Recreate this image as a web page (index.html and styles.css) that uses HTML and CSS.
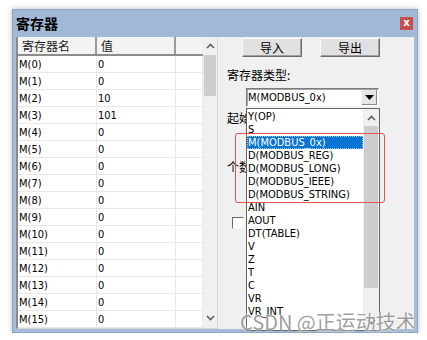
FILE: index.html
```html
<!DOCTYPE html>
<html lang="zh-CN">
    <head>
        <meta charset="UTF-8">
        <title>寄存器</title>
        <link rel="stylesheet" href="styles.css">
    </head>
    <body>
        <div class="window">
            <div class="titlebar">
                <span class="title">寄存器</span>
                <span class="close">x</span>
            </div>
            <div class="client">
                <div class="grid">
                    <div class="grid-body">
                        <div class="row head">
                            <span class="c1">寄存器名</span><span class="c2">值</span><span class="c3"></span>
                        </div>
                        <div class="row"><span class="c1">M(0)</span><span class="c2">0</span><span class="c3"></span></div>
                        <div class="row"><span class="c1">M(1)</span><span class="c2">0</span><span class="c3"></span></div>
                        <div class="row"><span class="c1">M(2)</span><span class="c2">10</span><span class="c3"></span></div>
                        <div class="row"><span class="c1">M(3)</span><span class="c2">101</span><span class="c3"></span></div>
                        <div class="row"><span class="c1">M(4)</span><span class="c2">0</span><span class="c3"></span></div>
                        <div class="row"><span class="c1">M(5)</span><span class="c2">0</span><span class="c3"></span></div>
                        <div class="row"><span class="c1">M(6)</span><span class="c2">0</span><span class="c3"></span></div>
                        <div class="row"><span class="c1">M(7)</span><span class="c2">0</span><span class="c3"></span></div>
                        <div class="row"><span class="c1">M(8)</span><span class="c2">0</span><span class="c3"></span></div>
                        <div class="row"><span class="c1">M(9)</span><span class="c2">0</span><span class="c3"></span></div>
                        <div class="row"><span class="c1">M(10)</span><span class="c2">0</span><span class="c3"></span></div>
                        <div class="row"><span class="c1">M(11)</span><span class="c2">0</span><span class="c3"></span></div>
                        <div class="row"><span class="c1">M(12)</span><span class="c2">0</span><span class="c3"></span></div>
                        <div class="row"><span class="c1">M(13)</span><span class="c2">0</span><span class="c3"></span></div>
                        <div class="row"><span class="c1">M(14)</span><span class="c2">0</span><span class="c3"></span></div>
                        <div class="row"><span class="c1">M(15)</span><span class="c2">0</span><span class="c3"></span></div>
                    </div>
                    <div class="vscroll grid-scroll">
                        <div class="arrow">
                            <svg width="9" height="6" viewBox="0 0 9 6"><path d="M1 5 L4.5 1.5 L8 5" fill="none" stroke="#606060" stroke-width="1.6"/></svg>
                        </div>
                        <div class="thumb"></div>
                        <div class="track"></div>
                        <div class="arrow">
                            <svg width="9" height="6" viewBox="0 0 9 6"><path d="M1 1 L4.5 4.5 L8 1" fill="none" stroke="#606060" stroke-width="1.6"/></svg>
                        </div>
                    </div>
                </div>

                <div class="side">
                    <div class="buttons">
                        <button class="btn">导入</button>
                        <button class="btn">导出</button>
                    </div>
                    <div class="label">寄存器类型:</div>
                    <div class="combo">
                        <div class="combo-box">
                            <span class="combo-text">M(MODBUS_0x)</span>
                            <span class="drop-btn">
                                <svg width="9" height="5" viewBox="0 0 9 5"><path d="M0 0 H9 L4.5 5 Z" fill="#000"/></svg>
                            </span>
                        </div>
                        <div class="list">
                            <div class="items">
                                <div class="item">Y(OP)</div>
                                <div class="item">S</div>
                                <div class="item selected">M(MODBUS_0x)</div>
                                <div class="item">D(MODBUS_REG)</div>
                                <div class="item">D(MODBUS_LONG)</div>
                                <div class="item">D(MODBUS_IEEE)</div>
                                <div class="item">D(MODBUS_STRING)</div>
                                <div class="item">AIN</div>
                                <div class="item">AOUT</div>
                                <div class="item">DT(TABLE)</div>
                                <div class="item">V</div>
                                <div class="item">Z</div>
                                <div class="item">T</div>
                                <div class="item">C</div>
                                <div class="item">VR</div>
                                <div class="item">VR_INT</div>
                            </div>
                            <div class="vscroll list-scroll">
                                <div class="arrow">
                                    <svg width="9" height="6" viewBox="0 0 9 6"><path d="M1 5 L4.5 1.5 L8 5" fill="none" stroke="#606060" stroke-width="1.6"/></svg>
                                </div>
                                <div class="thumb"></div>
                                <div class="track"></div>
                                <div class="arrow">
                                    <svg width="9" height="6" viewBox="0 0 9 6"><path d="M1 1 L4.5 4.5 L8 1" fill="none" stroke="#606060" stroke-width="1.6"/></svg>
                                </div>
                            </div>
                        </div>
                        <div class="mark"></div>
                    </div>
                    <div class="field first">起始</div>
                    <div class="field second">个数</div>
                    <div class="check"></div>
                </div>
            </div>
        </div>
        <div class="watermark">CSDN @正运动技术</div>
    </body>
</html>
```

FILE: styles.css
```css
body {
    margin: 0;
    background-color: #ffffff;
    font-family: "DejaVu Sans Condensed", "DejaVu Sans", sans-serif;
    font-size: 11px;
    color: #000;
}
.window {
    position: relative;
    box-sizing: border-box;
    width: 406px;
    height: 324px;
    margin: 9px 0 0 12px;
    border: 1px solid #8fa4bd;
    background-color: #a4bdd9;
    box-shadow: 0 0 6px rgba(0, 0, 0, 0.25);
    display: flex;
    flex-direction: column;
}
.titlebar {
    height: 27px;
    display: flex;
    align-items: center;
    justify-content: space-between;
    padding: 0 4px 0 3px;
    background-color: #9fb9d6;
}
.title {
    font-family: "Noto Sans CJK SC", sans-serif;
    font-weight: bold;
    font-size: 14px;
    margin-top: -1px;
}
.close {
    width: 13px;
    height: 13px;
    background-color: #c94f4f;
    color: #fff;
    font-family: "DejaVu Sans", sans-serif;
    font-weight: bold;
    font-size: 10px;
    line-height: 11px;
    text-align: center;
    margin-top: -1px;
}
.client {
    flex: 1;
    margin: 0 3px 3px 3px;
    background-color: #f0f0f0;
    display: flex;
    position: relative;
}

/* register grid */
.grid {
    width: 202px;
    box-sizing: border-box;
    border-left: 2px solid #8a8a8a;
    border-right: 1px solid #d8d8d8;
    border-bottom: 1px solid #d8d8d8;
    background-color: #fff;
    display: flex;
}
.grid-body {
    width: 185px;
}
.row {
    display: flex;
    height: 17px;
    box-sizing: border-box;
    border-bottom: 1px solid #e8e8e8;
    padding-top: 2px;
    line-height: 14px;
}
.row span {
    box-sizing: border-box;
    border-right: 1px solid #e8e8e8;
    margin-top: -2px;
    padding-top: 2px;
    padding-left: 1px;
    white-space: nowrap;
}
.c1 { width: 79px; }
.c2 { width: 79px; }
.c3 { width: 27px; }
.row.head {
    height: 19px;
    padding-top: 0;
    background-color: #f3f3f3;
    border-bottom: 2px solid #8c8c8c;
    font-family: "Noto Sans CJK SC", sans-serif;
    font-size: 12px;
    line-height: 17px;
    color: #222;
}
.row.head span {
    margin-top: 0;
    padding-top: 0;
    border-right: 2px solid #9a9a9a;
    padding-left: 4px;
}
.row.head .c3 {
    border-right: none;
}

/* scrollbars */
.vscroll {
    width: 14px;
    background-color: #f0f0f0;
    display: flex;
    flex-direction: column;
}
.vscroll .arrow {
    height: 17px;
    display: flex;
    align-items: center;
    justify-content: center;
}
.vscroll .thumb {
    margin: 0 1px;
    background-color: #cdcdcd;
}
.vscroll .track {
    flex: 1;
}
.grid-scroll .arrow:first-child {
    height: 18px;
}
.grid-scroll .thumb {
    height: 41px;
}
.grid-scroll .arrow:last-child {
    height: 20px;
}

/* right panel */
.side {
    flex: 1;
    padding-left: 9px;
    position: relative;
}
.buttons {
    display: flex;
    gap: 18px;
    margin: 1px 0 0 15px;
}
.btn {
    width: 60px;
    height: 19px;
    padding: 0;
    background-color: #e1e1e1;
    border: 1px solid;
    border-color: #fafafa #6d6d6d #6d6d6d #fafafa;
    box-shadow: inset -1px -1px 0 #a0a0a0;
    font-family: "Noto Sans CJK SC", sans-serif;
    font-size: 12px;
    line-height: 16px;
    color: #000;
}
.label {
    margin-top: 9px;
    font-family: "Noto Sans CJK SC", sans-serif;
    font-size: 12px;
    line-height: 18px;
}
.combo {
    position: relative;
    margin: 4px 0 0 19px;
    width: 133px;
    z-index: 2;
}
.combo-box {
    height: 19px;
    box-sizing: border-box;
    border: 1px solid;
    border-color: #7a7a7a #f8f8f8 #f8f8f8 #7a7a7a;
    box-shadow: inset 1px 1px 0 #a8a8a8;
    background-color: #fff;
    display: flex;
    align-items: center;
    justify-content: space-between;
}
.combo-text {
    padding-left: 1px;
}
.drop-btn {
    width: 15px;
    height: 15px;
    margin-right: 1px;
    background-color: #e6e6e6;
    border-left: 1px solid #f8f8f8;
    box-shadow: inset -1px -1px 0 #8a8a8a;
    display: flex;
    align-items: center;
    justify-content: center;
}
.list {
    position: absolute;
    left: 0;
    top: 20px;
    width: 134px;
    height: 223px;
    box-sizing: border-box;
    border: 1px solid #646464;
    background-color: #fff;
    display: flex;
}
.items {
    flex: 1;
    padding-top: 1px;
}
.item {
    height: 13px;
    line-height: 13px;
    padding-left: 1px;
    white-space: nowrap;
}
.item.selected {
    background-color: #0a74d5;
    color: #fff;
    outline: 1px dotted #9cc7f0;
    outline-offset: -1px;
}
.list-scroll {
    width: 16px;
}
.list-scroll .thumb {
    height: 162px;
}
.mark {
    position: absolute;
    left: -11px;
    top: 45px;
    width: 148px;
    height: 68px;
    border: 1.5px solid #e55454;
    border-radius: 3px;
}
.field {
    font-family: "Noto Sans CJK SC", sans-serif;
    font-size: 12px;
    line-height: 16px;
    position: relative;
    z-index: 1;
}
.field.first {
    margin-top: 3px;
}
.field.second {
    margin-top: 33px;
}
.check {
    width: 10px;
    height: 10px;
    margin: 42px 0 0 5px;
    background-color: #fff;
    border: 1px solid;
    border-color: #6d6d6d #f8f8f8 #f8f8f8 #6d6d6d;
}

/* watermark over the shot */
.watermark {
    position: absolute;
    left: 240px;
    top: 307px;
    font-family: "Noto Sans CJK SC", sans-serif;
    font-size: 20px;
    color: rgba(90, 90, 90, 0.6);
    text-shadow: 0 0 2px #fff, 0 0 1px #fff;
    white-space: nowrap;
    z-index: 5;
}
```
